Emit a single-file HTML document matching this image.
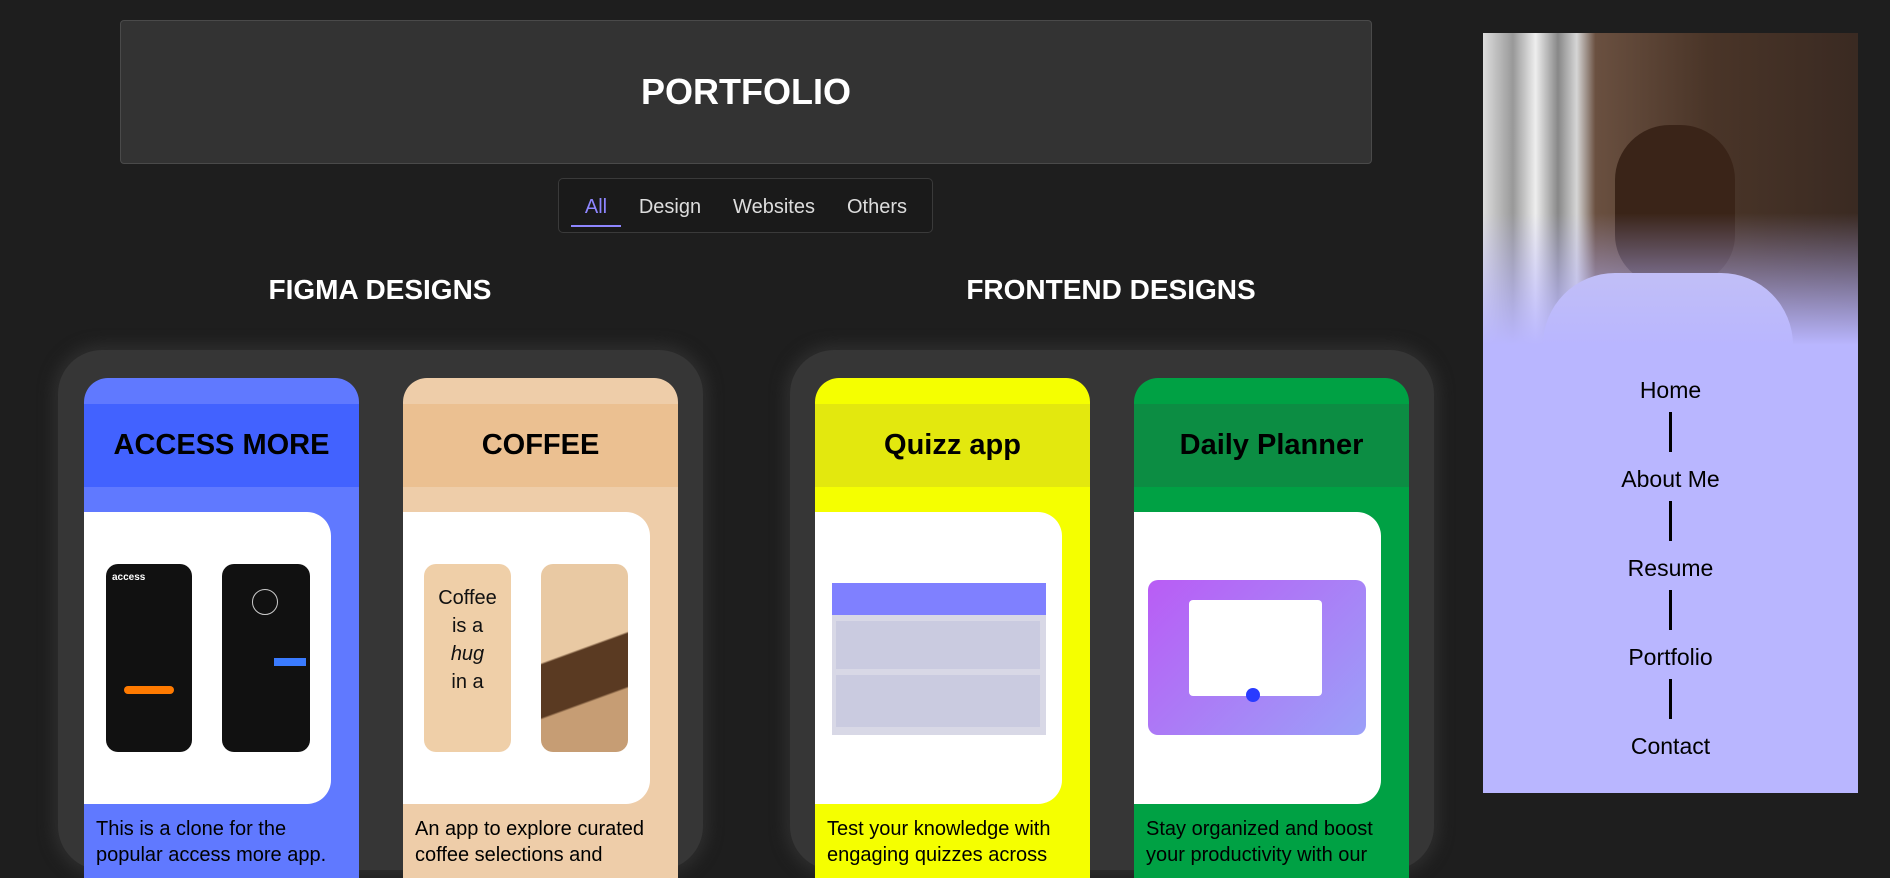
<!DOCTYPE html>
<html><head><meta charset="utf-8"><style>
*{margin:0;padding:0;box-sizing:border-box}
body{width:1890px;height:858px;background:#1e1e1e;font-family:"Liberation Sans",sans-serif;overflow:hidden;position:relative;color:#fff}
.abs{position:absolute}
.header{left:120px;top:20px;width:1252px;height:144px;background:#333;border:1px solid #4a4a4a;border-radius:4px;display:flex;align-items:center;justify-content:center;font-size:36px;font-weight:bold}
.filter{left:558px;top:178px;width:375px;height:55px;background:#1a1a1a;border:1px solid #3a3a3a;border-radius:5px}
.filter span{position:absolute;top:17px;font-size:20px;color:#ddd;transform:translateX(-50%)}
.h2{font-size:28px;font-weight:bold;transform:translateX(-50%);top:274px;white-space:nowrap}
.cont{top:350px;height:520px;background:#363636;border-radius:44px;box-shadow:0 0 14px 6px #2d2d2d}
.card{top:378px;width:275px;height:500px;border-radius:24px 24px 0 0;overflow:hidden}
.band{position:absolute;left:0;top:26px;width:100%;height:83px;display:flex;align-items:center;justify-content:center;color:#000;font-size:29px;font-weight:bold}
.white{position:absolute;left:0;top:134px;width:247px;height:292px;background:#fff;border-radius:0 24px 24px 0}
.desc{position:absolute;left:12px;top:438px;color:#000;font-size:20px;line-height:26px;width:240px}
.side{left:1483px;top:33px;width:375px;height:760px;background:#b9b6ff}
.nav{position:absolute;left:0;width:100%;text-align:center;color:#000;font-size:23px}
.ln{position:absolute;left:186px;width:3px;height:40px;background:#000}
.ph{position:absolute;background:#111;border-radius:12px}
</style></head><body>
<div class="abs header">PORTFOLIO</div>
<div class="abs filter">
<span style="left:37px;color:#8e86ff">All</span>
<div class="abs" style="left:12px;top:46px;width:50px;height:2px;background:#8e86ff"></div>
<span style="left:111px">Design</span>
<span style="left:215px">Websites</span>
<span style="left:318px">Others</span>
</div>
<div class="abs h2" style="left:380px">FIGMA DESIGNS</div>
<div class="abs h2" style="left:1111px">FRONTEND DESIGNS</div>
<div class="abs cont" style="left:58px;width:645px"></div>
<div class="abs cont" style="left:790px;width:644px"></div>

<div class="abs card" style="left:84px;background:#6079ff">
<div class="band" style="background:#4262ff">ACCESS MORE</div>
<div class="white">
<div class="ph" style="left:22px;top:52px;width:86px;height:188px"><div class="abs" style="left:18px;top:122px;width:50px;height:8px;background:#ff7a00;border-radius:4px"></div><div class="abs" style="left:6px;top:8px;font-size:10px;color:#fff;font-weight:bold">access</div></div>
<div class="ph" style="left:138px;top:52px;width:88px;height:188px"><div class="abs" style="left:30px;top:25px;width:26px;height:26px;border:1px solid #ccc;border-radius:50%"></div><div class="abs" style="left:52px;top:94px;width:32px;height:8px;background:#3a7bff"></div></div>
</div>
<div class="desc">This is a clone for the popular access more app.</div>
</div>

<div class="abs card" style="left:403px;background:#eecda9">
<div class="band" style="background:#ebc091">COFFEE</div>
<div class="white">
<div class="ph" style="left:21px;top:52px;width:87px;height:188px;background:#efcfa8;color:#111;font-size:20px;text-align:center;line-height:28px;padding-top:20px">Coffee<br>is a<br><i>hug</i><br>in a</div>
<div class="ph" style="left:138px;top:52px;width:87px;height:188px;background:linear-gradient(160deg,#e9c9a3 45%,#5a3a22 46%,#5a3a22 70%,#c69d74 71%)"></div>
</div>
<div class="desc">An app to explore curated coffee selections and</div>
</div>

<div class="abs card" style="left:815px;background:#f5ff00">
<div class="band" style="background:#e3e80e">Quizz app</div>
<div class="white">
<div class="abs" style="left:17px;top:71px;width:214px;height:152px;background:#d8d8e6"><div style="height:32px;background:#7f80ff"></div><div class="abs" style="left:4px;top:38px;width:204px;height:48px;background:#cacbe0"></div><div class="abs" style="left:4px;top:92px;width:204px;height:52px;background:#cacbe0"></div></div>
</div>
<div class="desc">Test your knowledge with engaging quizzes across</div>
</div>

<div class="abs card" style="left:1134px;background:#00a144">
<div class="band" style="background:#0c8d43">Daily Planner</div>
<div class="white">
<div class="abs" style="left:14px;top:68px;width:218px;height:155px;border-radius:10px;background:linear-gradient(135deg,#b95cf5,#9ba0f8)"><div class="abs" style="left:41px;top:20px;width:133px;height:96px;background:#fff;border-radius:4px"></div><div class="abs" style="left:98px;top:108px;width:14px;height:14px;background:#2a3bff;border-radius:50%"></div></div>
</div>
<div class="desc">Stay organized and boost your productivity with our</div>
</div>

<div class="abs side">
<div class="abs" style="left:0;top:0;width:375px;height:312px;background:linear-gradient(90deg,#ddd 0,#999 8%,#eee 14%,#888 20%,#d5d5d5 25%,#6a5040 30%,#4a3528 60%,#3a2a22 100%)"></div>
<div class="abs" style="left:132px;top:92px;width:120px;height:160px;background:#3a2418;border-radius:55px 55px 50px 50px"></div>
<div class="abs" style="left:60px;top:240px;width:250px;height:72px;background:#c8c6f0;border-radius:80px 80px 0 0"></div>
<div class="abs" style="left:0;top:180px;width:375px;height:132px;background:linear-gradient(180deg,rgba(185,182,255,0),#b9b6ff)"></div>
<div class="nav" style="top:344px">Home</div><div class="ln" style="top:379px"></div>
<div class="nav" style="top:433px">About Me</div><div class="ln" style="top:468px"></div>
<div class="nav" style="top:522px">Resume</div><div class="ln" style="top:557px"></div>
<div class="nav" style="top:611px">Portfolio</div><div class="ln" style="top:646px"></div>
<div class="nav" style="top:700px">Contact</div>
</div>
</body></html>
